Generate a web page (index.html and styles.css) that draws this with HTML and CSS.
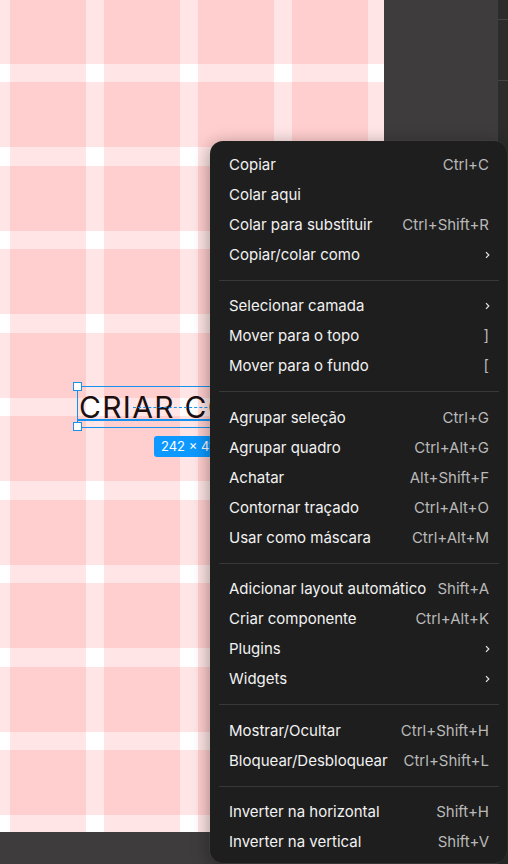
FILE: index.html
```html
<!DOCTYPE html>
<html lang="pt">
<head>
<meta charset="utf-8">
<title>Menu de contexto</title>
<link rel="stylesheet" href="styles.css">
</head>
<body>
<div class="app">
  <main class="canvas">
    <div class="frame">
      <div class="sel-text">CRIAR CONTA</div>
      <div class="sel-box"></div>
      <div class="sel-inner"></div>
      <div class="sel-dash"></div>
      <div class="handle handle-tl"></div>
      <div class="handle handle-bl"></div>
      <div class="size-badge">242 × 41</div>
    </div>
  </main>
  <aside class="rpanel">
    <div class="rp-row rp-row1"></div>
    <div class="rp-row rp-row2"></div>
  </aside>
</div>

<div class="menu">
  <div class="item"><span>Copiar</span><span class="key">Ctrl+C</span></div>
  <div class="item"><span>Colar aqui</span></div>
  <div class="item"><span>Colar para substituir</span><span class="key">Ctrl+Shift+R</span></div>
  <div class="item"><span>Copiar/colar como</span><svg class="chev" width="5" height="8" viewBox="0 0 5 8"><path d="M1 1.2 L3.8 4 L1 6.8" fill="none" stroke="#e6e6e6" stroke-width="1.2"/></svg></div>
  <div class="sep"></div>
  <div class="item"><span>Selecionar camada</span><svg class="chev" width="5" height="8" viewBox="0 0 5 8"><path d="M1 1.2 L3.8 4 L1 6.8" fill="none" stroke="#e6e6e6" stroke-width="1.2"/></svg></div>
  <div class="item"><span>Mover para o topo</span><span class="key">]</span></div>
  <div class="item"><span>Mover para o fundo</span><span class="key">[</span></div>
  <div class="sep"></div>
  <div class="item"><span>Agrupar seleção</span><span class="key">Ctrl+G</span></div>
  <div class="item"><span>Agrupar quadro</span><span class="key">Ctrl+Alt+G</span></div>
  <div class="item"><span>Achatar</span><span class="key">Alt+Shift+F</span></div>
  <div class="item"><span>Contornar traçado</span><span class="key">Ctrl+Alt+O</span></div>
  <div class="item"><span>Usar como máscara</span><span class="key">Ctrl+Alt+M</span></div>
  <div class="sep"></div>
  <div class="item"><span>Adicionar layout automático</span><span class="key">Shift+A</span></div>
  <div class="item"><span>Criar componente</span><span class="key">Ctrl+Alt+K</span></div>
  <div class="item"><span>Plugins</span><svg class="chev" width="5" height="8" viewBox="0 0 5 8"><path d="M1 1.2 L3.8 4 L1 6.8" fill="none" stroke="#e6e6e6" stroke-width="1.2"/></svg></div>
  <div class="item"><span>Widgets</span><svg class="chev" width="5" height="8" viewBox="0 0 5 8"><path d="M1 1.2 L3.8 4 L1 6.8" fill="none" stroke="#e6e6e6" stroke-width="1.2"/></svg></div>
  <div class="sep"></div>
  <div class="item"><span>Mostrar/Ocultar</span><span class="key">Ctrl+Shift+H</span></div>
  <div class="item"><span>Bloquear/Desbloquear</span><span class="key">Ctrl+Shift+L</span></div>
  <div class="sep"></div>
  <div class="item"><span>Inverter na horizontal</span><span class="key">Shift+H</span></div>
  <div class="item"><span>Inverter na vertical</span><span class="key">Shift+V</span></div>
</div>
</body>
</html>
```

FILE: styles.css
```css
* { box-sizing: border-box; }
html, body {
  margin: 0;
  padding: 0;
  width: 508px;
  height: 864px;
  overflow: hidden;
  background: #3e3c3d;
  font-family: Inter, "Noto Sans", sans-serif;
}
.app {
  display: flex;
  width: 508px;
  height: 864px;
}
.canvas {
  flex: 1;
  background: #3e3c3d;
}
.frame {
  position: relative;
  width: 384px;
  height: 832px;
  background-color: #ffffff;
  background-image:
    repeating-linear-gradient(to right, transparent 0 10px, rgba(255,0,0,0.1) 10px 86px, transparent 86px 94px),
    repeating-linear-gradient(to bottom, rgba(255,0,0,0.1) 0 64px, transparent 64px 82.5px, rgba(255,0,0,0.1) 82.5px 83.5px);
}
.rpanel {
  width: 10px;
  background: #2c2c2c;
  display: flex;
  flex-direction: column;
}
.rp-row { height: 1px; background: #444444; }
.rp-row1 { margin-top: 19px; }
.rp-row2 { margin-top: 60px; }

/* selection on canvas */
.sel-text {
  position: absolute;
  left: 79px;
  top: 388px;
  font-size: 30px;
  line-height: 38px;
  font-weight: 400;
  color: #1c0f10;
  white-space: nowrap;
  letter-spacing: 1.3px;
}
.sel-box {
  position: absolute;
  left: 77px;
  top: 386px;
  width: 260px;
  height: 42px;
  border: 1.5px solid #1592ef;
}
.sel-inner {
  position: absolute;
  left: 78px;
  top: 419px;
  width: 200px;
  height: 1.5px;
  background: #1592ef;
}
.sel-dash {
  position: absolute;
  left: 133px;
  top: 407px;
  width: 100px;
  border-top: 1px dashed #1592ef;
}
.handle {
  position: absolute;
  width: 9px;
  height: 9px;
  background: #fff;
  border: 1px solid #1592ef;
}
.handle-tl { left: 73px; top: 382px; }
.handle-bl { left: 73px; top: 422px; }
.size-badge {
  position: absolute;
  left: 154px;
  top: 436px;
  height: 21px;
  padding: 0 7px;
  border-radius: 3px;
  background: #0d99ff;
  color: #fff;
  font-size: 13px;
  line-height: 21px;
  white-space: nowrap;
}

/* context menu */
.menu {
  position: absolute;
  left: 210px;
  top: 141px;
  width: 297px;
  padding: 8.5px 0 6.5px;
  background: #1e1e1e;
  border-radius: 13px;
  box-shadow: 0 0 0 0.5px rgba(255,255,255,0.08), 0 4px 18px rgba(0,0,0,0.4);
  color: #f2f2f2;
  font-size: 15px;
}
.item {
  height: 30px;
  padding: 0 18px 0 19px;
  display: flex;
  align-items: center;
  justify-content: space-between;
  white-space: nowrap;
}
.key { color: #b9b9b9; }
.chev { display: block; margin-right: -1px; }
.sep {
  height: 1px;
  margin: 10.2px 8px 10.3px 9px;
  background: #383838;
}
```
